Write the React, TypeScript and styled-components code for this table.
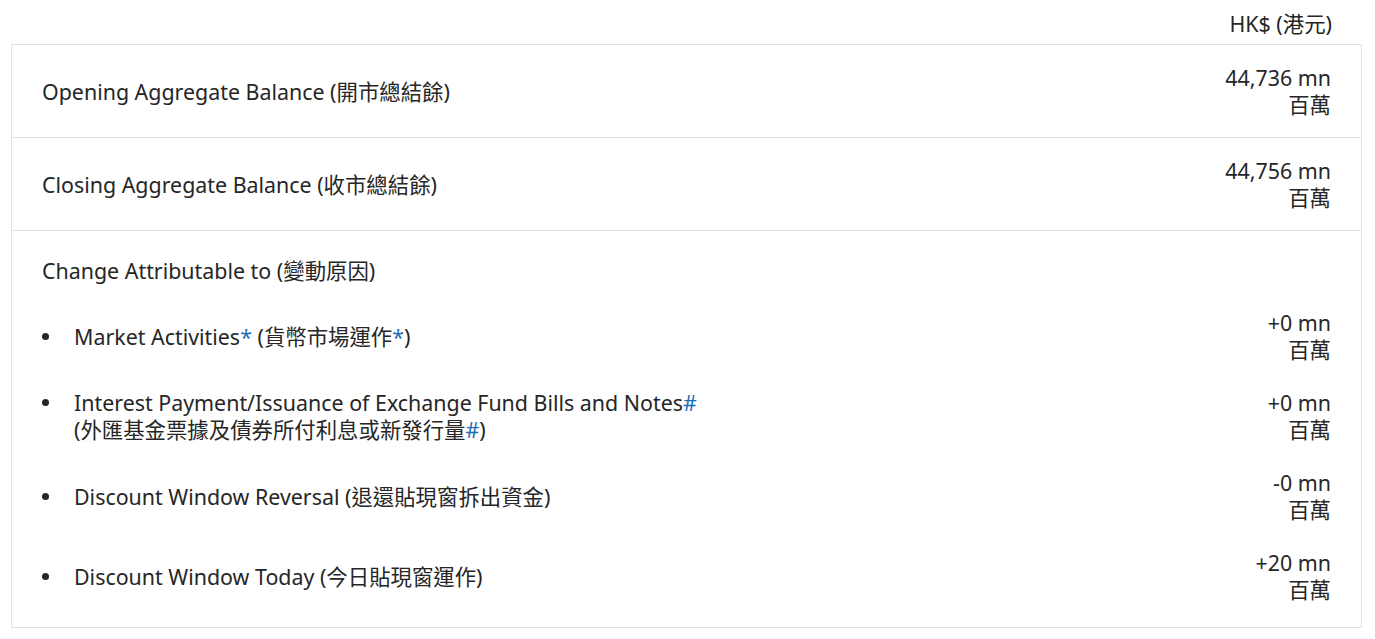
import React from "react";
import styled, { createGlobalStyle } from "styled-components";

const Global = createGlobalStyle`
  html, body { margin: 0; padding: 0; background: #fff; }
  body {
    font-family: "Noto Sans", "Noto Sans CJK TC", sans-serif;
    color: #262626;
  }
`;

const FS = "21.4px";

const Page = styled.div`
  width: 1351px;
  margin-left: 11px;
`;

const Currency = styled.div`
  height: 44px;
  display: flex;
  align-items: center;
  justify-content: flex-end;
  padding-right: 30px;
  font-size: ${FS};
`;

const Table = styled.div`
  border: 1px solid #e2e2e2;
`;

const Row = styled.div`
  display: flex;
  align-items: center;
  justify-content: space-between;
  padding: 19px 30px;
  border-top: 1px solid #e2e2e2;
  &:first-child { border-top: none; }
`;

const Label = styled.div`
  font-size: ${FS};
  line-height: 27px;
`;

const Value = styled.div`
  font-size: ${FS};
  line-height: 27px;
  text-align: right;
`;

const Section = styled.div`
  border-top: 1px solid #e2e2e2;
  padding: 26px 30px 24px;
`;

const SectionTitle = styled.div`
  font-size: ${FS};
  line-height: 27px;
  margin-bottom: 25px;
`;

const List = styled.ul`
  list-style: none;
  margin: 0;
  padding: 0;
  display: flex;
  flex-direction: column;
  gap: 26px;
`;

const Item = styled.li`
  display: flex;
  align-items: center;
  justify-content: space-between;
`;

const ItemLabel = styled.div`
  position: relative;
  padding-left: 32px;
  font-size: ${FS};
  line-height: 27px;
  &::before {
    content: "";
    position: absolute;
    left: 0;
    top: 50%;
    width: 7px;
    height: 7px;
    margin-top: -3px;
    border-radius: 50%;
    background: #262626;
  }
  &[data-top="true"]::before { top: 13px; }
`;

const Mark = styled.span`
  color: #1e6eb4;
`;

const Amount = ({ v }: { v: string }) => (
  <Value>
    {v} mn
    <br />
    百萬
  </Value>
);

export default function App() {
  return (
    <Page>
      <Global />
      <Currency>HK$ (港元)</Currency>
      <Table>
        <Row>
          <Label>Opening Aggregate Balance (開市總結餘)</Label>
          <Amount v="44,736" />
        </Row>
        <Row>
          <Label>Closing Aggregate Balance (收市總結餘)</Label>
          <Amount v="44,756" />
        </Row>
        <Section>
          <SectionTitle>Change Attributable to (變動原因)</SectionTitle>
          <List>
            <Item>
              <ItemLabel>
                Market Activities<Mark>*</Mark> (貨幣市場運作<Mark>*</Mark>)
              </ItemLabel>
              <Amount v="+0" />
            </Item>
            <Item>
              <ItemLabel data-top="true">
                Interest Payment/Issuance of Exchange Fund Bills and Notes<Mark>#</Mark>
                <br />
                (外匯基金票據及債券所付利息或新發行量<Mark>#</Mark>)
              </ItemLabel>
              <Amount v="+0" />
            </Item>
            <Item>
              <ItemLabel>Discount Window Reversal (退還貼現窗拆出資金)</ItemLabel>
              <Amount v="-0" />
            </Item>
            <Item>
              <ItemLabel>Discount Window Today (今日貼現窗運作)</ItemLabel>
              <Amount v="+20" />
            </Item>
          </List>
        </Section>
      </Table>
    </Page>
  );
}
